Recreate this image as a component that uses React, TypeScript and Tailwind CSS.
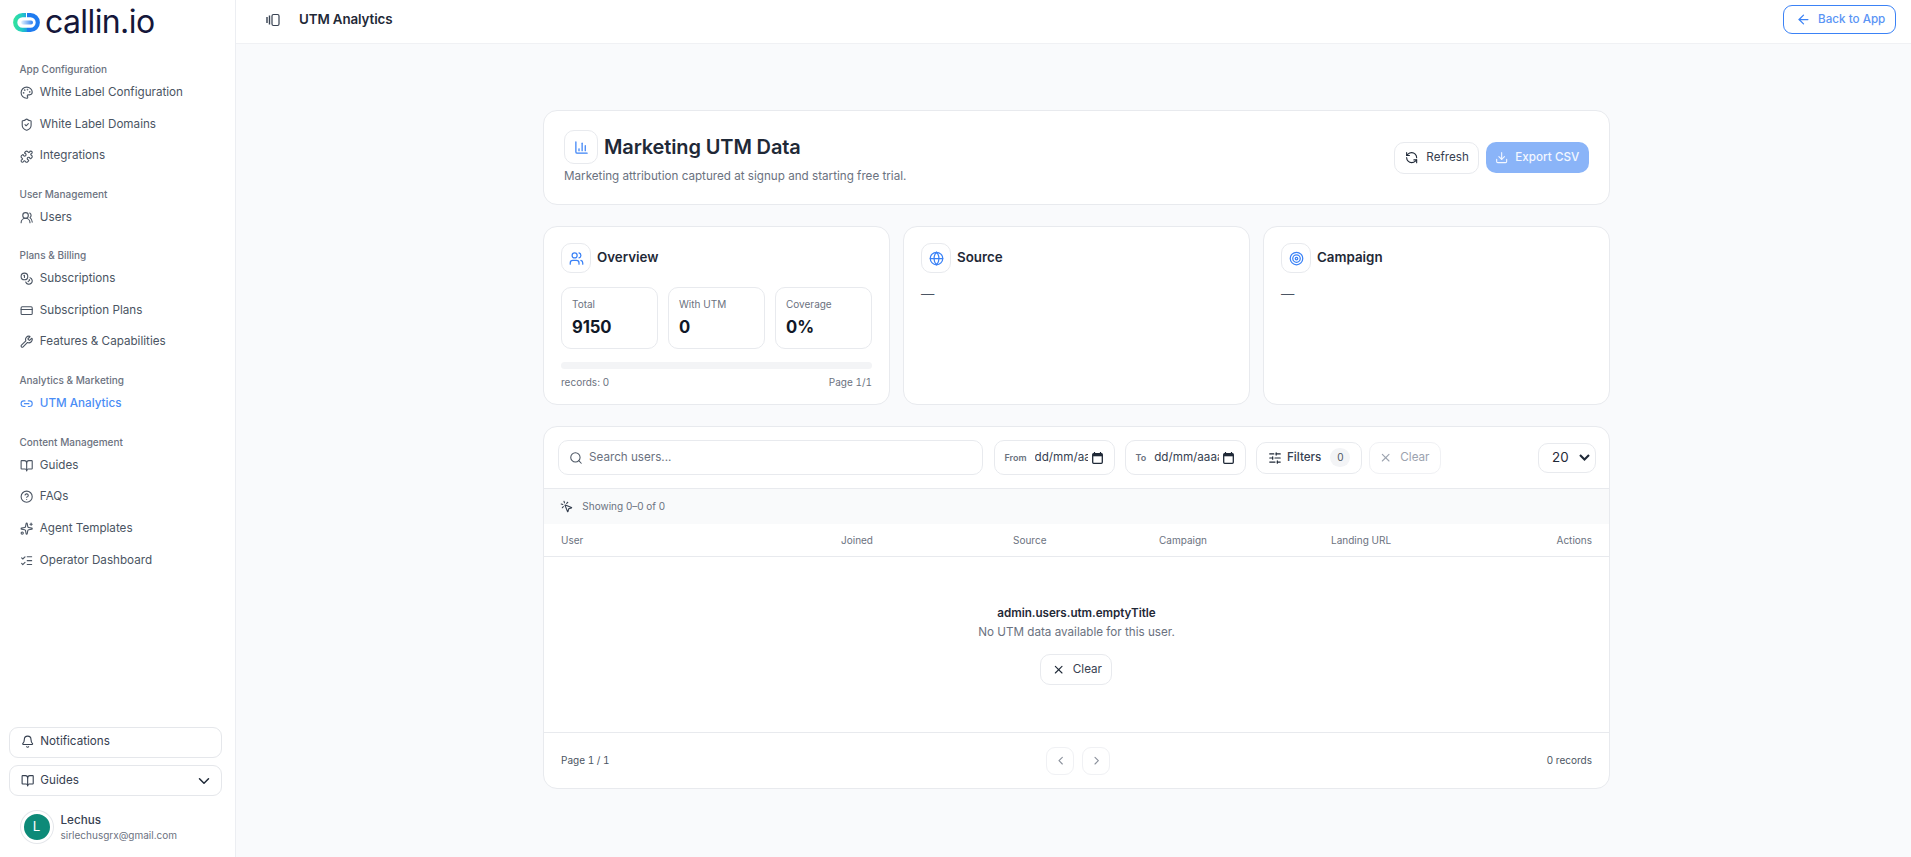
import React from "react";
import {
  Palette, ShieldCheck, Puzzle, UsersRound, Coins, CreditCard, Wrench, Link2, BookOpen, CircleHelp, Sparkles, ListChecks,
  Bell, ChevronDown, ChartColumn, Users, Globe, Target, RefreshCcw, Download, Search, MousePointerClick, SlidersHorizontal,
  X, ChevronLeft, ChevronRight, ArrowLeft,
} from "lucide-react";

const FONT = "[font-family:Inter,'Noto_Sans',sans-serif]";

function Logo() {
  return (
    <div className="flex items-center h-[24px] ml-[13px] mt-[10px]">
      <svg width="27" height="19" viewBox="0 0 27 19" fill="none">
        <defs>
          <linearGradient id="lg" x1="0" x2="1" y1="0" y2="0">
            <stop offset="0" stopColor="#2fe0a0" />
            <stop offset="0.6" stopColor="#22c8c8" />
            <stop offset="1" stopColor="#1fa0e0" />
          </linearGradient>
          <linearGradient id="lp" x1="0" x2="1" y1="0" y2="0">
            <stop offset="0" stopColor="#e8f4ff" />
            <stop offset="1" stopColor="#2f80f0" />
          </linearGradient>
        </defs>
        <path d="M13 2.2H9.5a7.3 7.3 0 0 0 0 14.6H14" stroke="url(#lg)" strokeWidth="4.2" />
        <path d="M14 2.2h3.5a7.3 7.3 0 0 1 0 14.6H14" stroke="#1e7bf0" strokeWidth="4.2" />
        <rect x="8" y="7.5" width="12" height="4" rx="2" fill="url(#lp)" />
      </svg>
      <span className="ml-[5px] text-[32px] leading-none tracking-[-0.6px] text-[#15173a] font-normal [font-family:Inter,sans-serif]">callin.io</span>
    </div>
  );
}

type NavItem = { icon: React.ComponentType<any>; label: string; active?: boolean };
const groups: { title: string; mt: string; items: NavItem[] }[] = [
  { title: "App Configuration", mt: "mt-[24px]", items: [
    { icon: Palette, label: "White Label Configuration" },
    { icon: ShieldCheck, label: "White Label Domains" },
    { icon: Puzzle, label: "Integrations" },
  ] },
  { title: "User Management", mt: "mt-[15px]", items: [{ icon: UsersRound, label: "Users" }] },
  { title: "Plans & Billing", mt: "mt-[14px]", items: [
    { icon: Coins, label: "Subscriptions" },
    { icon: CreditCard, label: "Subscription Plans" },
    { icon: Wrench, label: "Features & Capabilities" },
  ] },
  { title: "Analytics & Marketing", mt: "mt-[15px]", items: [{ icon: Link2, label: "UTM Analytics", active: true }] },
  { title: "Content Management", mt: "mt-[15px]", items: [
    { icon: BookOpen, label: "Guides" },
    { icon: CircleHelp, label: "FAQs" },
    { icon: Sparkles, label: "Agent Templates" },
    { icon: ListChecks, label: "Operator Dashboard" },
  ] },
];

function Sidebar() {
  return (
    <aside className="w-[236px] shrink-0 h-[857px] bg-white border-r border-[#eceef2] flex flex-col">
      <Logo />
      <nav className="flex flex-col mt-[4px]">
        {groups.map((g) => (
          <div key={g.title} className={g.mt}>
            <div className="pl-[19.5px] h-[15px] leading-[15px] text-[10px] font-medium text-[#6b7280]">{g.title}</div>
            {g.items.map((it) => (
              <div key={it.label} className={`flex items-center h-[31.7px] pl-[19.5px] gap-[7px] text-[11.67px] ${it.active ? "text-[#4a8df6] font-medium" : "text-[#4b5563] font-normal"}`}>
                <it.icon size={13.33} strokeWidth={2} className="shrink-0" />
                <span>{it.label}</span>
              </div>
            ))}
          </div>
        ))}
      </nav>
      <div className="mt-auto pl-[9px] pr-[13px] pb-[14px] flex flex-col">
        <div className="flex items-center h-[31px] border border-[#e5e7eb] rounded-[9px] pl-[11px] gap-[6px] text-[11.67px] font-normal text-[#374151]">
          <Bell size={13.33} strokeWidth={2} />
          <span>Notifications</span>
        </div>
        <div className="mt-[7.5px] flex items-center h-[31px] border border-[#e5e7eb] rounded-[9px] pl-[11px] pr-[8px] gap-[6px] text-[11.67px] font-normal text-[#374151]">
          <BookOpen size={13.33} strokeWidth={2} />
          <span>Guides</span>
          <ChevronDown size={18} strokeWidth={2} className="ml-auto text-[#1f2937]" />
        </div>
        <div className="mt-[15px] flex items-center pl-[11.5px] gap-[8px]">
          <div className="w-[32px] h-[32px] rounded-full bg-[#0d8a78] border-[3px] border-white ring-1 ring-[#e5e7eb] flex items-center justify-center text-white text-[13.33px]">L</div>
          <div className="flex flex-col">
            <span className="text-[11.67px] leading-[16px] font-medium text-[#374151]">Lechus</span>
            <span className="text-[10px] leading-[14px] text-[#6b7280]">sirlechusgrx@gmail.com</span>
          </div>
        </div>
      </div>
    </aside>
  );
}

function IconBox({ icon: Icon, size, box }: { icon: React.ComponentType<any>; size: number; box: string }) {
  return (
    <div className={`${box} shrink-0 flex items-center justify-center bg-white border border-[#e8eaee] rounded-[10px] text-[#3b82f6]`}>
      <Icon size={size} strokeWidth={2} />
    </div>
  );
}

function Stat({ label, value }: { label: string; value: string }) {
  return (
    <div className="h-[62px] border border-[#e8eaee] rounded-[10px] pl-[10px] pt-[9px]">
      <div className="text-[10px] leading-[14px] text-[#6b7280]">{label}</div>
      <div className="mt-[6px] text-[16.67px] leading-[20px] font-bold tracking-[-0.1px] text-[#111827]">{value}</div>
    </div>
  );
}

function Card({ icon, title, children }: { icon: React.ComponentType<any>; title: string; children?: React.ReactNode }) {
  return (
    <div className="h-[179px] bg-white border border-[#e8eaee] rounded-[14px] px-[17px] pt-[16px]">
      <div className="flex items-center gap-[6px]">
        <IconBox icon={icon} size={15} box="w-[30px] h-[30px]" />
        <span className="text-[13.33px] leading-[18px] pb-[2px] font-semibold text-[#1f2937]">{title}</span>
      </div>
      {children ?? <div className="mt-[11px] text-[13.33px] leading-[20px] text-[#4b5563]">—</div>}
    </div>
  );
}

function DateField({ label, value, textW }: { label: string; value: string; textW: string }) {
  return (
    <div className="w-[121px] h-[35px] bg-white border border-[#e8eaee] rounded-[10px] flex items-center pl-[9.5px] gap-[8px]">
      <span className="text-[9px] font-semibold text-[#6b7280]">{label}</span>
      <span className={`${textW} text-[11.67px] text-[#374151] overflow-hidden whitespace-nowrap shrink-0`}>{value}</span>
      <svg width="11" height="12" viewBox="0 0 11 12" className="shrink-0 -ml-[3.5px]" fill="none">
        <path d="M2.5 0v2M8.5 0v2" stroke="#1f2937" strokeWidth="1.2" />
        <rect x="0.7" y="1.7" width="9.6" height="9.6" rx="1" stroke="#1f2937" strokeWidth="1.3" />
        <rect x="0.7" y="1.7" width="9.6" height="2.6" fill="#1f2937" />
      </svg>
    </div>
  );
}

export default function App() {
  return (
    <div className={`flex w-[1911px] h-[857px] overflow-hidden bg-[#f9fafc] ${FONT}`}>
      <Sidebar />
      <div className="flex-1 min-w-0 flex flex-col">
        <header className="h-[44px] shrink-0 bg-white border-b border-[#f0f1f4] flex items-center pl-[30px] pr-[15px] pb-[4px]">
          <svg width="14" height="14" viewBox="0 0 14 14" fill="none" stroke="#374151" strokeWidth="1.2">
            <rect x="6" y="1.5" width="7" height="11" rx="1.5" />
            <path d="M1 4v6M3.5 2.5v9" strokeWidth="1.4" />
          </svg>
          <span className="ml-[19px] text-[13.33px] font-semibold tracking-[-0.1px] text-[#1f2937]">UTM Analytics</span>
          <div className="ml-auto w-[113px] h-[29px] border border-[#3b82f6] rounded-[9px] flex items-center pl-[12px] gap-[7px] text-[#5b95f5] text-[11.67px] font-medium">
            <ArrowLeft size={15} strokeWidth={2} className="text-[#3b82f6]" />
            <span>Back to App</span>
          </div>
        </header>
        <main className="ml-[307px] w-[1067px] pt-[66px] flex flex-col">
          <section className="h-[95px] bg-white border border-[#e8eaee] rounded-[14px] flex items-center justify-between pl-[20px] pr-[20px]">
            <div className="flex flex-col">
              <div className="flex items-center gap-[6px]">
                <IconBox icon={ChartColumn} size={15} box="w-[34px] h-[34px]" />
                <h1 className="text-[20px] font-semibold leading-[28px] pb-[1px] tracking-[-0.13px] text-[#1f2937]">Marketing UTM Data</h1>
              </div>
              <p className="mt-[3px] text-[11.67px] leading-[18px] text-[#6b7280]">Marketing attribution captured at signup and starting free trial.</p>
            </div>
            <div className="flex items-center gap-[7px]">
              <div className="w-[85px] h-[32px] bg-white border border-[#e8eaee] rounded-[10px] flex items-center pl-[10px] gap-[8px] text-[11.67px] font-normal text-[#374151]">
                <RefreshCcw size={13.33} strokeWidth={2} className="text-[#1f2937]" />
                <span>Refresh</span>
              </div>
              <div className="w-[103px] h-[31px] bg-[#8ab4f8] rounded-[10px] flex items-center pl-[9px] gap-[7px] text-[11.67px] font-medium text-[#f3f7ff]">
                <Download size={13.33} strokeWidth={2} />
                <span>Export CSV</span>
              </div>
            </div>
          </section>

          <section className="mt-[21px] grid grid-cols-3 gap-[13px]">
            <Card icon={Users} title="Overview">
              <div className="mt-[14px] grid grid-cols-3 gap-[10px]">
                <Stat label="Total" value="9150" />
                <Stat label="With UTM" value="0" />
                <Stat label="Coverage" value="0%" />
              </div>
              <div className="mt-[13px] h-[7px] rounded-full bg-[#f3f4f6]" />
              <div className="mt-[6px] flex justify-between text-[10px] leading-[14px] text-[#6b7280]">
                <span>records: 0</span>
                <span className="tabular-nums">Page 1/1</span>
              </div>
            </Card>
            <Card icon={Globe} title="Source" />
            <Card icon={Target} title="Campaign" />
          </section>

          <section className="mt-[21px] h-[363px] bg-white border border-[#e8eaee] rounded-[14px] flex flex-col overflow-hidden">
            <div className="h-[62px] shrink-0 flex items-center pl-[14px] pr-[13px] border-b border-[#e8eaee]">
              <div className="w-[425px] h-[35px] border border-[#e8eaee] rounded-[10px] flex items-center pl-[9.5px] gap-[6.5px] text-[11.67px] text-[#6b7280]">
                <Search size={14} strokeWidth={1.8} className="text-[#4b5563]" />
                <span>Search users...</span>
              </div>
              <div className="ml-[11px]"><DateField label="From" value="dd/mm/aaaa" textW="w-[53px]" /></div>
              <div className="ml-[10px]"><DateField label="To" value="dd/mm/aaaa" textW="w-[64.5px]" /></div>
              <div className="ml-[10px] w-[106px] h-[32px] border border-[#e8eaee] rounded-[10px] flex items-center pl-[11px] gap-[5px] text-[11.67px] font-medium text-[#374151]">
                <SlidersHorizontal size={14} strokeWidth={2} className="text-[#1f2937]" />
                <span>Filters</span>
                <span className="ml-[4px] w-[20px] h-[19px] rounded-full bg-[#f3f4f6] flex items-center justify-center text-[10px] font-normal text-[#4b5563]">0</span>
              </div>
              <div className="ml-[7px] w-[72px] h-[32px] border border-[#f0f1f4] rounded-[10px] flex items-center pl-[9px] gap-[8px] text-[11.67px] text-[#9ca3af]">
                <X size={13.33} strokeWidth={2} />
                <span>Clear</span>
              </div>
              <div className="ml-auto w-[58px] h-[30px] border border-[#e8eaee] rounded-[10px] flex items-center pl-[13px] pr-[5px] justify-between text-[13.33px] text-[#1f2937]">
                <span>20</span>
                <svg width="11" height="7" viewBox="0 0 11 7" fill="none" stroke="#1f2937" strokeWidth="2.1">
                  <path d="M1 1l4.5 4.5L10 1" />
                </svg>
              </div>
            </div>
            <div className="h-[35px] shrink-0 bg-[#f9fafb] flex items-center pl-[16px] gap-[9px] text-[10px] text-[#6b7280]">
              <MousePointerClick size={13.33} strokeWidth={2} className="text-[#374151]" />
              <span>Showing 0–0 of 0</span>
            </div>
            <div className="h-[33px] shrink-0 border-b border-[#e8eaee] grid grid-cols-[280px_172px_146px_172px_1fr_auto] items-center pl-[17px] pr-[17px] text-[10px] text-[#6b7280]">
              <div>User</div>
              <div>Joined</div>
              <div>Source</div>
              <div>Campaign</div>
              <div>Landing URL</div>
              <div>Actions</div>
            </div>
            <div className="flex-1 flex flex-col items-center pt-[47px]">
              <div className="text-[11.67px] leading-[18px] font-semibold tracking-[-0.04px] text-[#1f2937]">admin.users.utm.emptyTitle</div>
              <div className="mt-[1px] text-[11.67px] leading-[18px] text-[#6b7280]">No UTM data available for this user.</div>
              <div className="mt-[13px] w-[72px] h-[31px] border border-[#e8eaee] rounded-[10px] flex items-center pl-[11px] gap-[8px] text-[11.67px] text-[#374151] font-normal -translate-x-[1px]">
                <X size={13.33} strokeWidth={2} className="text-[#1f2937]" />
                <span>Clear</span>
              </div>
            </div>
            <div className="h-[56px] shrink-0 border-t border-[#e8eaee] grid grid-cols-3 items-center pl-[17px] pr-[17px] text-[10px] text-[#4b5563]">
              <span className="tabular-nums">Page 1 / 1</span>
              <div className="flex justify-center gap-[8px] pl-[4px]">
                <div className="w-[28px] h-[28px] border border-[#f0f1f4] rounded-[9px] flex items-center justify-center text-[#8b919c]"><ChevronLeft size={13.33} strokeWidth={2} /></div>
                <div className="w-[28px] h-[28px] border border-[#f0f1f4] rounded-[9px] flex items-center justify-center text-[#8b919c]"><ChevronRight size={13.33} strokeWidth={2} /></div>
              </div>
              <span className="text-right">0 records</span>
            </div>
          </section>
        </main>
      </div>
    </div>
  );
}
